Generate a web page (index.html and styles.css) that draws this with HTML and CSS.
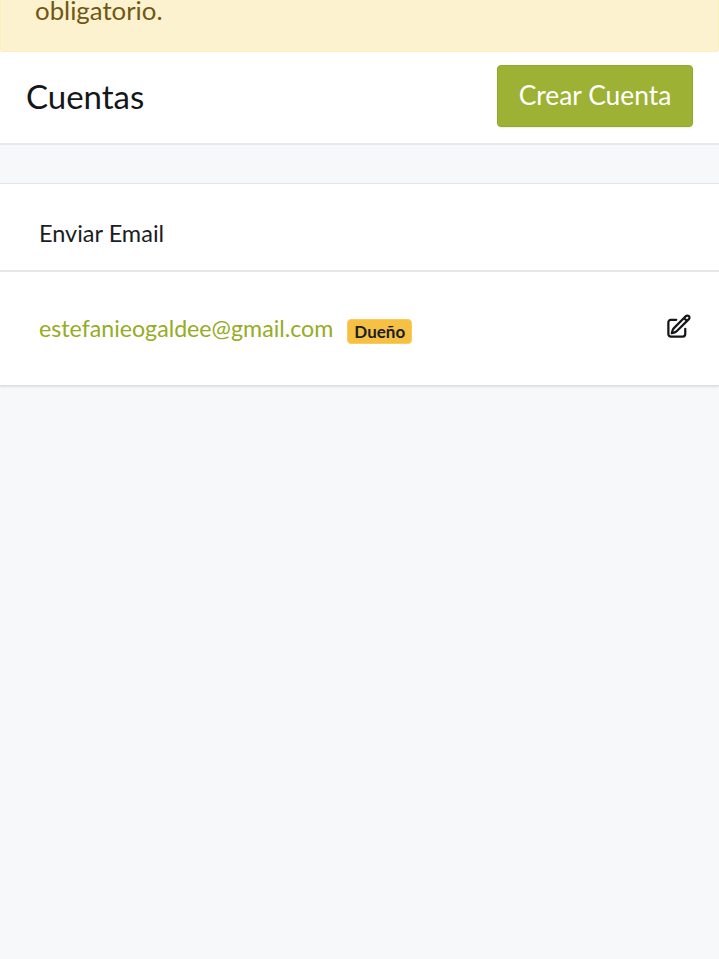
FILE: index.html
```html
<!DOCTYPE html>
<html lang="es">
<head>
<meta charset="utf-8">
<title>Cuentas</title>
<link rel="stylesheet" href="styles.css">
</head>
<body>
<div class="alert"><span class="alert-text">obligatorio.</span></div>
<header class="page-header">
  <h1 class="page-title">Cuentas</h1>
  <button class="btn-create" type="button">Crear Cuenta</button>
</header>
<div class="spacer"></div>
<section class="card">
  <div class="row row-head">Enviar Email</div>
  <div class="row row-item">
    <a class="email" href="#">estefanieogaldee@gmail.com</a>
    <span class="badge">Dueño</span>
    <svg class="edit-icon" viewBox="0 0 24 24" fill="none" stroke="currentColor" stroke-width="2" stroke-linecap="round" stroke-linejoin="round"><path d="M16.862 4.487l1.687-1.688a1.875 1.875 0 112.652 2.652L10.582 16.07a4.5 4.5 0 01-1.897 1.13L6 18l.8-2.685a4.5 4.5 0 011.13-1.897l8.932-8.931zm0 0L19.5 7.125M18 14v4.75A2.25 2.25 0 0115.75 21H5.25A2.25 2.25 0 013 18.75V8.25A2.25 2.25 0 015.25 6H10"/></svg>
  </div>
</section>
</body>
</html>
```
FILE: styles.css
```css
* { box-sizing: border-box; }
html, body { margin: 0; padding: 0; height: 100%; }
body {
  background: #f7f8fa;
  font-family: Lato, "Open Sans", sans-serif;
  color: #16181d;
  overflow: hidden;
}
.alert {
  height: 52px;
  display: flex;
  align-items: flex-end;
  padding: 0 34px 25px;
  background: #fdf2cf;
  border: 1px solid #fbeebf;
  border-top: 0;
  border-radius: 0 0 4px 4px;
  color: #705814;
  font-size: 25.8px;
  line-height: 28px;
}
.alert-text { display: block; margin-bottom: 2px; }
.page-header {
  height: 93px;
  display: flex;
  align-items: center;
  justify-content: space-between;
  padding: 0 26px;
  background: #fff;
  border-bottom: 2px solid #e8e9ee;
}
.page-title {
  margin: -3px 0 0;
  font-size: 33px;
  font-weight: 400;
  line-height: 1;
  color: #14161a;
}
.btn-create {
  width: 196px;
  height: 62px;
  margin-top: -3px;
  padding: 0 0 2px;
  background: #9db134;
  border: 1px solid #93a72e;
  border-radius: 4px;
  box-shadow: 0 1px 2px rgba(0,0,0,.08);
  color: #fff;
  font: 400 26.4px Lato, sans-serif;
}
.spacer { height: 38px; }
.card {
  background: #fff;
  border-top: 1px solid #e4e5e9;
  border-bottom: 1px solid #dcdde1;
  box-shadow: 0 1px 2px rgba(0,0,0,.1);
}
.row { display: flex; align-items: center; padding: 0 27px 0 39px; }
.row-head {
  height: 88px;
  padding-top: 11px;
  border-bottom: 2px solid #e6e7ea;
  font-size: 23.5px;
  color: #1b1d22;
}
.row-item { height: 113px; }
.email {
  color: #95ac24;
  font-size: 23.2px;
  text-decoration: none;
  margin-top: -2px;
}
.badge {
  margin-left: 14px;
  width: 65px;
  height: 25px;
  margin-top: 6px;
  display: flex;
  align-items: center;
  justify-content: center;
  background: #f6c143;
  border: 1px solid #f9cd62;
  border-radius: 4px;
  font-size: 17px;
  font-weight: 700;
  color: #1b1d26;
}
.edit-icon {
  margin-left: auto;
  margin-top: -5px;
  width: 27px;
  height: 27px;
  color: #14161a;
}
```
